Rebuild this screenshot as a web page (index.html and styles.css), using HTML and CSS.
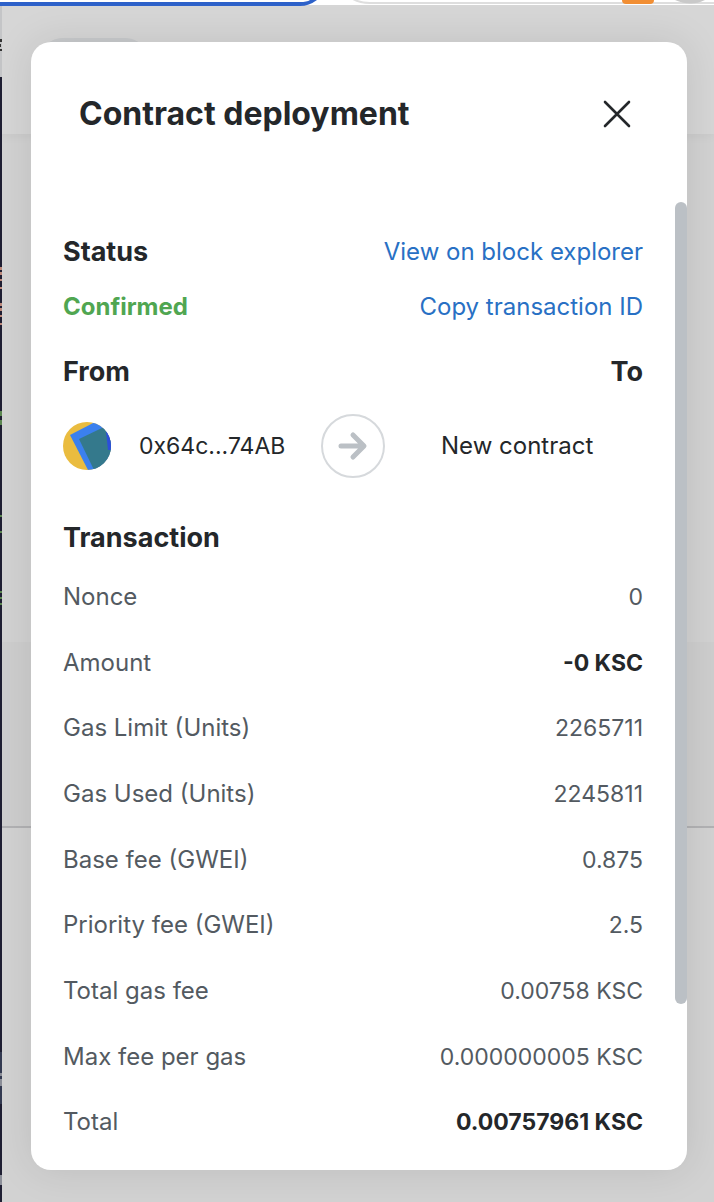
FILE: index.html
```html
<!DOCTYPE html>
<html lang="en">
<head>
<meta charset="utf-8">
<meta name="viewport" content="width=device-width, initial-scale=1">
<title>Contract deployment</title>
<link rel="stylesheet" href="styles.css">
</head>
<body>
<div class="backdrop" aria-hidden="true">
  <div class="page-header"></div>
  <div class="page-band"></div>
  <div class="page-pill"></div>
  <div class="editor-edge">
    <svg width="2" height="1202" viewBox="0 0 2 1202">
      <path fill="#c4c5c7" d="M0 0h2v77H0z"/>
      <path fill="#333" d="M0 39h2v3H0zM0 44h1v3H0zM0 49h2v2H0z"/>
      <path fill="#bd8a7c" d="M0 267h2v3H0zM0 272h2v3H0zM0 279h2v2H0zM0 287h2v2H0zM0 303h2v3H0zM0 308h2v3H0zM0 315h2v2H0zM0 323h2v2H0z"/>
      <path fill="#5c8751" d="M0 411h2v5H0zM0 420h2v5H0zM0 515h2v2H0zM0 531h2v2H0zM0 591h2v2H0zM0 597h2v2H0zM0 603h2v2H0z"/>
      <path fill="#343b52" d="M0 1052h2v52H0z"/>
      <path fill="#8b8e98" d="M0 1073h2v3H0zM0 1079h2v7H0zM0 1175h2v10H0z"/>
    </svg>
  </div>
  <svg class="browser-bar" width="714" height="6" viewBox="0 0 714 6">
    <path fill="#fff" d="M0 0h714v5H0z"/>
    <path fill="none" stroke="#dedede" stroke-width="2" d="M353-1Q360 3 370 3H714"/>
    <path fill="#2d61c9" d="M0 2H300Q307 2 310 0H317Q309 6 300 6H0z"/>
    <path fill="#f18e33" d="M622 0h32q0 4-4 4h-24q-4 0-4-4z"/>
    <path fill="#c9c9c9" d="M675 0h30q-14 7-30 0z"/>
  </svg>
</div>

<main class="modal" role="dialog" aria-labelledby="modal-title">
  <header class="modal-header">
    <h1 class="modal-title" id="modal-title">Contract deployment</h1>
    <button class="close" type="button" aria-label="Close">
      <svg width="28" height="28" viewBox="0 0 28 28" fill="none" stroke="#24272a" stroke-width="2.6" stroke-linecap="round"><path d="M2 2l24 24M26 2L2 26"/></svg>
    </button>
  </header>

  <div class="modal-body">
    <div class="line">
      <h2 class="heading">Status</h2>
      <a class="link" href="#explorer">View on block explorer</a>
    </div>
    <div class="line line-state">
      <span class="confirmed">Confirmed</span>
      <button class="link" type="button">Copy transaction ID</button>
    </div>
    <div class="line line-parties">
      <h2 class="heading">From</h2>
      <h2 class="heading">To</h2>
    </div>
    <div class="parties">
      <div class="sender">
        <svg class="avatar" width="48" height="48" viewBox="0 0 48 48" aria-hidden="true">
          <defs><clipPath id="disc"><circle cx="24" cy="24" r="24"/></clipPath></defs>
          <g clip-path="url(#disc)">
            <path fill="#eabc3f" d="M0 0h48v48H0z"/>
            <path fill="#3b80ee" d="M7 13L34-1l14 8v41H25z"/>
            <path fill="#34798c" d="M16 17L41 5l7 14v29H31z"/>
            <path fill="#2c4edb" d="M43 9l2 19h3V7z"/>
          </g>
        </svg>
        <span class="address">0x64c...74AB</span>
      </div>
      <svg class="arrow" width="64" height="64" viewBox="0 0 64 64" fill="none" aria-hidden="true">
        <circle cx="32" cy="32" r="31" stroke="#d6d9dc" stroke-width="2"/>
        <path stroke="#bbc0c5" stroke-width="5" stroke-linejoin="round" stroke-linecap="round" d="M20 32h22M32 21l11 11-11 11"/>
      </svg>
      <div class="recipient">New contract</div>
    </div>
    <h2 class="heading heading-transaction">Transaction</h2>
    <dl class="details">
      <div class="row"><dt>Nonce</dt><dd>0</dd></div>
      <div class="row"><dt>Amount</dt><dd class="strong">-0 KSC</dd></div>
      <div class="row"><dt>Gas Limit (Units)</dt><dd>2265711</dd></div>
      <div class="row"><dt>Gas Used (Units)</dt><dd>2245811</dd></div>
      <div class="row"><dt>Base fee (GWEI)</dt><dd>0.875</dd></div>
      <div class="row"><dt>Priority fee (GWEI)</dt><dd>2.5</dd></div>
      <div class="row"><dt>Total gas fee</dt><dd>0.00758 KSC</dd></div>
      <div class="row"><dt>Max fee per gas</dt><dd>0.000000005 KSC</dd></div>
      <div class="row"><dt>Total</dt><dd class="strong">0.00757961 KSC</dd></div>
    </dl>
  </div>
  <div class="scroll-thumb" aria-hidden="true"></div>
</main>
</body>
</html>
```
FILE: styles.css
```css
* {
  box-sizing: border-box;
}

body {
  margin: 0;
  min-height: 100vh;
  padding: 42px 27px 32px 31px;
  display: flex;
  background: #d2d2d2;
  color: #24272a;
  font-family: Inter, "Liberation Sans", sans-serif;
  font-size: 24px;
  line-height: 34px;
}

h1, h2, dl, dd {
  margin: 0;
}

.backdrop {
  position: absolute;
  inset: 0;
  overflow: hidden;
  background: #d2d2d2;
}

.page-header {
  position: absolute;
  inset: 0 0 auto;
  height: 134px;
  background: #d6d6d6;
  box-shadow: 0 0 12px rgba(0, 0, 0, 0.06);
}

.page-band {
  position: absolute;
  top: 642px;
  left: 0;
  right: 0;
  height: 186px;
  background: #cecece;
  border-bottom: 2px solid #b2b2b4;
}

.page-pill {
  position: absolute;
  top: 38px;
  left: 42px;
  width: 104px;
  height: 40px;
  border-radius: 20px;
  background: #c8cacc;
}

.editor-edge {
  position: absolute;
  inset: 0 auto 0 0;
  width: 2px;
  background: #1f1f33;
}

.editor-edge svg,
.browser-bar {
  display: block;
}

.browser-bar {
  position: absolute;
  top: 0;
  left: 0;
}

.modal {
  position: relative;
  flex: 1;
  min-width: 0;
  display: flex;
  flex-direction: column;
  background: #fff;
  border-radius: 20px;
  box-shadow: 0 0 40px rgba(0, 0, 0, 0.1);
}

.modal-header {
  display: flex;
  align-items: center;
  justify-content: space-between;
  height: 144px;
  padding: 0 56px 0 48px;
}

.modal-title {
  font-size: 32px;
  line-height: 44px;
  font-weight: 700;
}

.close {
  display: flex;
  padding: 0;
  border: 0;
  background: none;
  cursor: pointer;
}

.modal-body {
  flex: 1;
  display: flex;
  flex-direction: column;
  padding: 48px 44px 15px 32px;
}

.line {
  display: flex;
  align-items: center;
  justify-content: space-between;
}

.line-state {
  margin-top: 20px;
}

.line-parties {
  margin-top: 30px;
}

.heading {
  font-size: 27px;
  line-height: 36px;
  font-weight: 700;
}

.confirmed {
  color: #50a651;
  font-weight: 700;
}

.link {
  padding: 0;
  border: 0;
  background: none;
  color: #2870c4;
  font: inherit;
  text-decoration: none;
  cursor: pointer;
}

.parties {
  display: grid;
  grid-template-columns: 1fr 64px 1fr;
  align-items: center;
  margin-top: 24px;
}

.sender {
  display: flex;
  align-items: center;
  gap: 28px;
}

.address,
.row dd {
  font-size: 23px;
}

.recipient {
  padding-left: 56px;
}

.heading-transaction {
  margin: 42px 0 8px;
}

.details {
  flex: 1;
  display: flex;
  flex-direction: column;
  color: #535a61;
}

.row {
  flex: 1;
  display: flex;
  align-items: center;
  justify-content: space-between;
}

.row .strong {
  color: #24272a;
  font-weight: 700;
}

.scroll-thumb {
  position: absolute;
  top: 160px;
  right: 0;
  bottom: 166px;
  width: 12px;
  border-radius: 6px;
  background: #bbc0c5;
}
```
